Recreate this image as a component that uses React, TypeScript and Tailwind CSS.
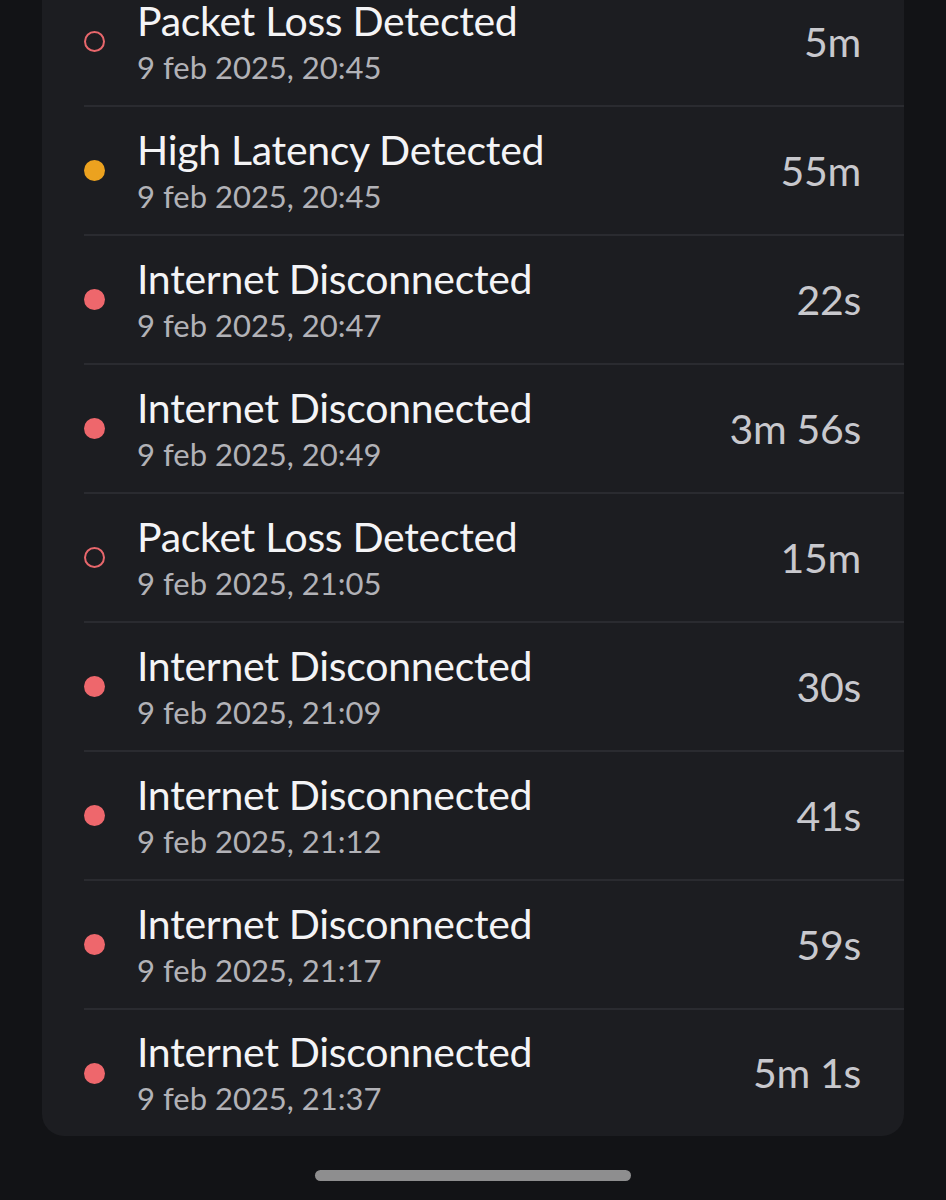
import React from 'react';

type Kind = 'loss' | 'latency' | 'down';

interface Incident {
  title: string;
  time: string;
  duration: string;
  kind: Kind;
}

const incidents: Incident[] = [
  { title: 'Packet Loss Detected', time: '9 feb 2025, 20:45', duration: '5m', kind: 'loss' },
  { title: 'High Latency Detected', time: '9 feb 2025, 20:45', duration: '55m', kind: 'latency' },
  { title: 'Internet Disconnected', time: '9 feb 2025, 20:47', duration: '22s', kind: 'down' },
  { title: 'Internet Disconnected', time: '9 feb 2025, 20:49', duration: '3m 56s', kind: 'down' },
  { title: 'Packet Loss Detected', time: '9 feb 2025, 21:05', duration: '15m', kind: 'loss' },
  { title: 'Internet Disconnected', time: '9 feb 2025, 21:09', duration: '30s', kind: 'down' },
  { title: 'Internet Disconnected', time: '9 feb 2025, 21:12', duration: '41s', kind: 'down' },
  { title: 'Internet Disconnected', time: '9 feb 2025, 21:17', duration: '59s', kind: 'down' },
  { title: 'Internet Disconnected', time: '9 feb 2025, 21:37', duration: '5m 1s', kind: 'down' },
];

function StatusDot({ kind }: { kind: Kind }) {
  if (kind === 'loss') {
    return <span className="block w-[21px] h-[21px] rounded-full border-[2.5px] border-[#e8676c] shrink-0" />;
  }
  if (kind === 'latency') {
    return <span className="block w-[21px] h-[21px] rounded-full bg-[#eca21f] shrink-0" />;
  }
  return <span className="block w-[21px] h-[21px] rounded-full bg-[#ee676c] shrink-0" />;
}

function IncidentRow({ item, last }: { item: Incident; last: boolean }) {
  return (
    <div
      className={`ml-[42px] flex items-center pr-[43px] ${
        last ? 'h-[126px]' : 'h-[129px] border-b-2 border-[#2a2b30]'
      }`}
    >
      <div className="w-[21px] flex justify-center">
        <StatusDot kind={item.kind} />
      </div>
      <div className="ml-[32px] flex-1 flex flex-col">
        <div className="text-[41px] leading-[46px] text-[#f4f4f6] tracking-[-0.3px]">{item.title}</div>
        <div className="text-[31px] leading-[38px] text-[#b2b2b7] mt-[4px]">{item.time}</div>
      </div>
      <div className="text-[41px] leading-[46px] text-[#c8c8cd] tracking-[-0.3px]">{item.duration}</div>
    </div>
  );
}

export default function App() {
  return (
    <div
      className="w-[946px] h-[1200px] overflow-hidden bg-[#121316] flex flex-col"
      style={{ fontFamily: 'Lato, "Noto Sans", sans-serif' }}
    >
      <div className="mx-[42px] -mt-[22px] bg-[#1c1d21] rounded-b-[22px]">
        {incidents.map((item, i) => (
          <IncidentRow key={i} item={item} last={i === incidents.length - 1} />
        ))}
      </div>
      <div className="mt-[34px] flex justify-center">
        <div className="w-[316px] h-[11px] rounded-full bg-[#8e8e8f]" />
      </div>
    </div>
  );
}
